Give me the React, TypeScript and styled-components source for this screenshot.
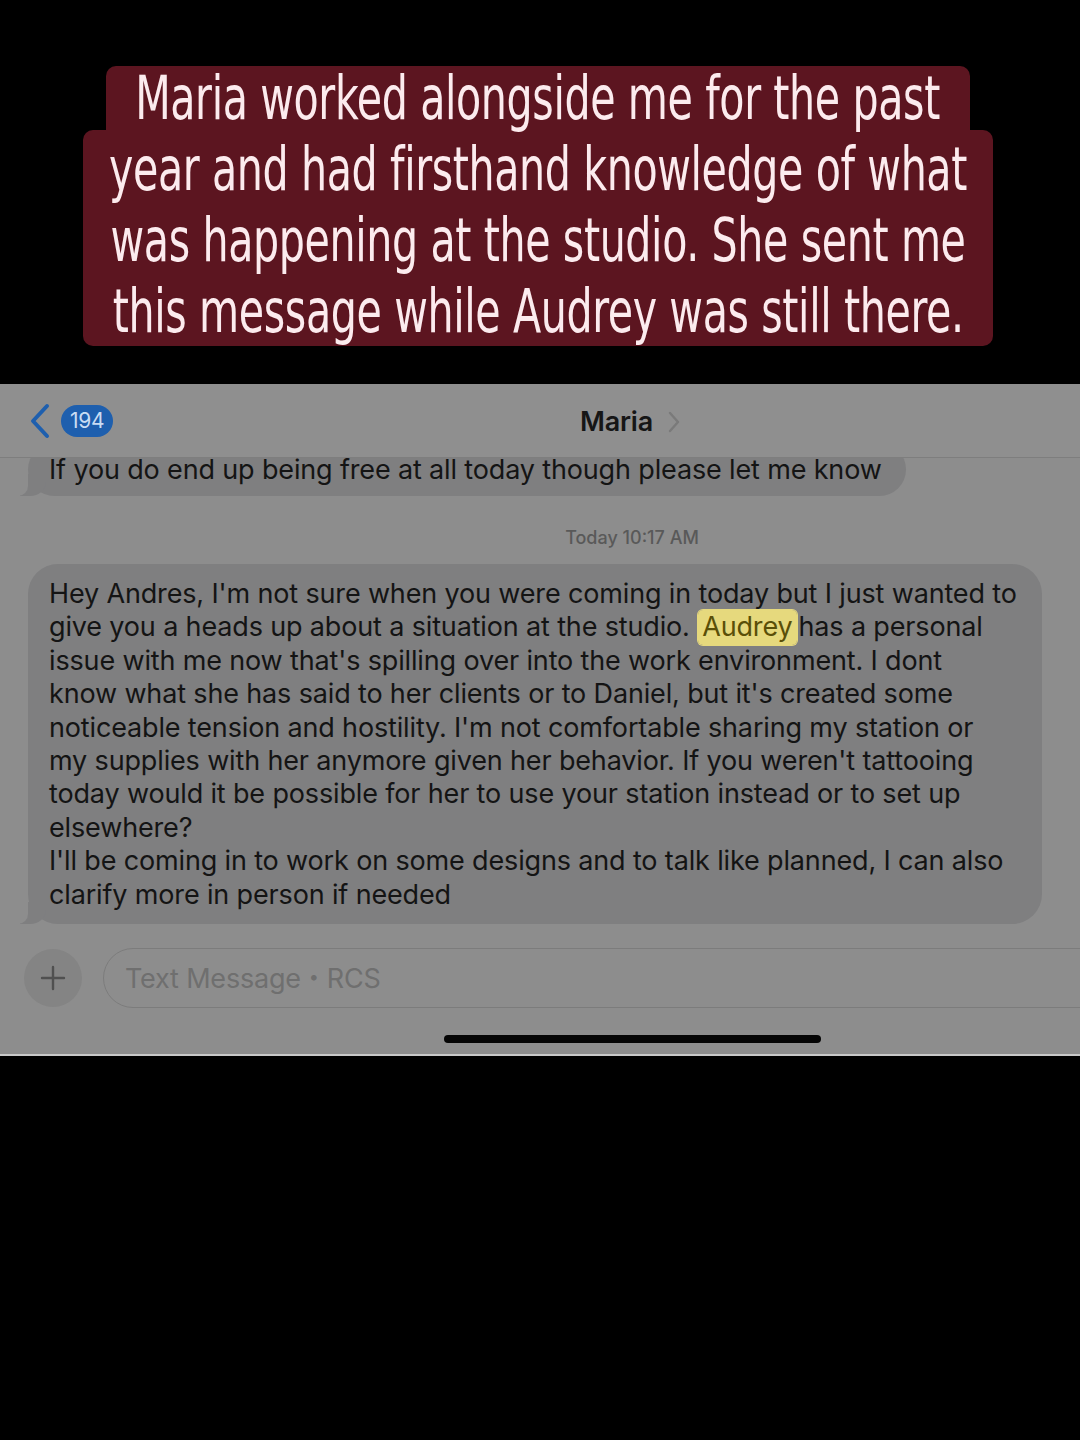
import React from "react";
import styled, { createGlobalStyle } from "styled-components";

const Global = createGlobalStyle`
  html, body { margin: 0; padding: 0; background: #000; }
  #root { width: 1080px; }
`;

const Page = styled.div`
  width: 1080px;
  height: 1440px;
  background: #000;
  display: flex;
  flex-direction: column;
  overflow: hidden;
`;

const CaptionArea = styled.div`
  height: 384px;
  box-sizing: border-box;
  padding-top: 66px;
  display: flex;
  flex-direction: column;
  align-items: center;
`;

const CaptionBlock = styled.div<{ $w: number; $top?: boolean }>`
  width: ${(p) => p.$w}px;
  background: #5c1520;
  border-radius: ${(p) => (p.$top ? "10px 10px 0 0" : "10px")};
  display: flex;
  flex-direction: column;
  align-items: center;
  margin-left: -4px;
  padding-top: ${(p) => (p.$top ? 0 : 3)}px;
  box-sizing: border-box;
`;

const CaptionLine = styled.div<{ $h: number }>`
  height: ${(p) => p.$h}px;
  line-height: ${(p) => p.$h}px;
  font-family: "DejaVu Sans", "Liberation Sans", sans-serif;
  font-stretch: condensed;
  font-size: 61px;
  color: #fcebee;
  white-space: nowrap;
  letter-spacing: -0.5px;
  transform: scaleX(0.75);
  transform-origin: center;
`;

const Screen = styled.div`
  height: 672px;
  background: #8d8d8d;
  overflow: hidden;
  position: relative;
  border-bottom: 2px solid #c9c9c9;
  box-sizing: border-box;
`;

const ScreenInner = styled.div`
  width: 1264px;
  height: 100%;
  display: flex;
  flex-direction: column;
  font-family: Inter, "Liberation Sans", sans-serif;
`;

const Header = styled.div`
  height: 74px;
  flex: none;
  display: grid;
  grid-template-columns: 1fr auto 1fr;
  align-items: center;
  border-bottom: 1px solid #7e7e7e;
  box-sizing: border-box;
  background: #8f8f8f;
  position: relative;
  z-index: 2;
`;

const BackGroup = styled.div`
  display: flex;
  align-items: center;
  gap: 9px;
  padding-left: 28px;
`;

const Badge = styled.div`
  height: 32px;
  min-width: 52px;
  box-sizing: border-box;
  padding: 0 9px;
  border-radius: 16px;
  background: #1e5fae;
  color: #c9dcf3;
  font-size: 21px;
  display: flex;
  align-items: center;
  justify-content: center;
  letter-spacing: -0.3px;
`;

const TitleGroup = styled.div`
  display: flex;
  align-items: center;
  gap: 15px;
  padding-right: 4px;
  padding-top: 2px;
`;

const Title = styled.div`
  font-size: 27px;
  font-weight: 600;
  color: #161616;
  letter-spacing: -0.2px;
`;

const Messages = styled.div`
  flex: 1;
  display: flex;
  flex-direction: column;
  overflow: hidden;
`;

const Bubble = styled.div<{ $w: number }>`
  position: relative;
  width: ${(p) => p.$w}px;
  box-sizing: border-box;
  margin-left: 28px;
  background: #7f7f80;
  border-radius: 30px;
  padding: 13px 20px 13px 21px;
  font-size: 27px;
  line-height: 33.4px;
  color: #141414;
  letter-spacing: -0.15px;
  white-space: nowrap;
  &::before {
    content: "";
    position: absolute;
    left: -8px;
    bottom: 0;
    width: 26px;
    height: 22px;
    background: #7f7f80;
    border-bottom-right-radius: 16px 14px;
  }
  &::after {
    content: "";
    position: absolute;
    left: -14px;
    bottom: 0;
    width: 14px;
    height: 24px;
    background: #8d8d8d;
    border-bottom-right-radius: 10px;
  }
`;

const FirstBubble = styled(Bubble)`
  margin-top: -15px;
  padding-top: 12px;
  padding-bottom: 11px;
  line-height: 30px;
`;

const Timestamp = styled.div`
  text-align: center;
  font-size: 18px;
  color: #595959;
  margin-top: 31px;
  margin-bottom: 16px;
  font-weight: 500;
`;

const BubbleText = styled.span`
  position: relative;
  z-index: 1;
`;

const Highlight = styled.span`
  background: #e6d97d;
  color: #5a4f08;
  border-radius: 5px;
  padding: 0 4px 2px;
  margin: 0 2px 0 1px;
  box-shadow: 0 0 0 1px #e6d97d;
`;

const InputRow = styled.div`
  display: flex;
  align-items: center;
  gap: 21px;
  padding: 24px 0 0 24px;
`;

const PlusButton = styled.div`
  width: 58px;
  height: 58px;
  border-radius: 50%;
  background: #848484;
  display: flex;
  align-items: center;
  justify-content: center;
  flex: none;
`;

const Field = styled.div`
  flex: 1;
  height: 60px;
  box-sizing: border-box;
  border: 1.5px solid #7c7c7c;
  border-radius: 30px;
  margin-right: 20px;
  display: flex;
  align-items: center;
  padding-left: 21px;
  font-size: 27px;
  color: #6f6f6f;
  letter-spacing: -0.2px;
`;

const Dot = styled.span`
  font-size: 18px;
  margin: 0 8px;
  position: relative;
  top: -2px;
`;

const HomeBar = styled.div`
  width: 377px;
  height: 8px;
  border-radius: 4px;
  background: #050505;
  margin: 27px auto 0;
`;

const mainLines: React.ReactNode[] = [
  "Hey Andres, I'm not sure when you were coming in today but I just wanted to",
  <>
    give you a heads up about a situation at the studio. <Highlight>Audrey</Highlight>has a personal
  </>,
  "issue with me now that's spilling over into the work environment. I dont",
  "know what she has said to her clients or to Daniel, but it's created some",
  "noticeable tension and hostility. I'm not  comfortable sharing my station or",
  "my supplies with her anymore given her behavior. If you weren't tattooing",
  "today would it be possible for her to use your station instead or to set up",
  "elsewhere?",
  "I'll be coming in to work on some designs and to talk like planned, I can also",
  "clarify more in person if needed",
];

export default function App() {
  return (
    <>
      <Global />
      <Page>
        <CaptionArea>
          <CaptionBlock $w={864} $top>
            <CaptionLine $h={64}>Maria worked alongside me for the past</CaptionLine>
          </CaptionBlock>
          <CaptionBlock $w={910}>
            <CaptionLine $h={71}>year and had firsthand knowledge of what</CaptionLine>
            <CaptionLine $h={71}>was happening at the studio. She sent me</CaptionLine>
            <CaptionLine $h={71}>this message while Audrey was still there.</CaptionLine>
          </CaptionBlock>
        </CaptionArea>
        <Screen>
          <ScreenInner>
            <Header>
              <BackGroup>
                <svg width="24" height="36" viewBox="0 0 24 36">
                  <path d="M19 3 L5 18 L19 33" fill="none" stroke="#1e5fae" strokeWidth="4" strokeLinecap="round" strokeLinejoin="round" />
                </svg>
                <Badge>194</Badge>
              </BackGroup>
              <TitleGroup>
                <Title>Maria</Title>
                <svg width="12" height="22" viewBox="0 0 12 22">
                  <path d="M2 2 L10 11 L2 20" fill="none" stroke="#7a7a7a" strokeWidth="2.4" strokeLinecap="round" strokeLinejoin="round" />
                </svg>
              </TitleGroup>
              <div />
            </Header>
            <Messages>
              <FirstBubble $w={878}>
                <BubbleText>If you do end up being free at all today though please let me know</BubbleText>
              </FirstBubble>
              <Timestamp>Today 10:17 AM</Timestamp>
              <Bubble $w={1014}>
                {mainLines.map((l, i) => (
                  <React.Fragment key={i}>
                    <BubbleText>{l}</BubbleText>
                    {i < mainLines.length - 1 && <br />}
                  </React.Fragment>
                ))}
              </Bubble>
              <InputRow>
                <PlusButton>
                  <svg width="26" height="26" viewBox="0 0 26 26">
                    <path d="M13 2 V24 M2 13 H24" stroke="#505050" strokeWidth="2.4" strokeLinecap="round" />
                  </svg>
                </PlusButton>
                <Field>
                  Text Message<Dot>•</Dot>RCS
                </Field>
              </InputRow>
              <HomeBar />
            </Messages>
          </ScreenInner>
        </Screen>
      </Page>
    </>
  );
}
